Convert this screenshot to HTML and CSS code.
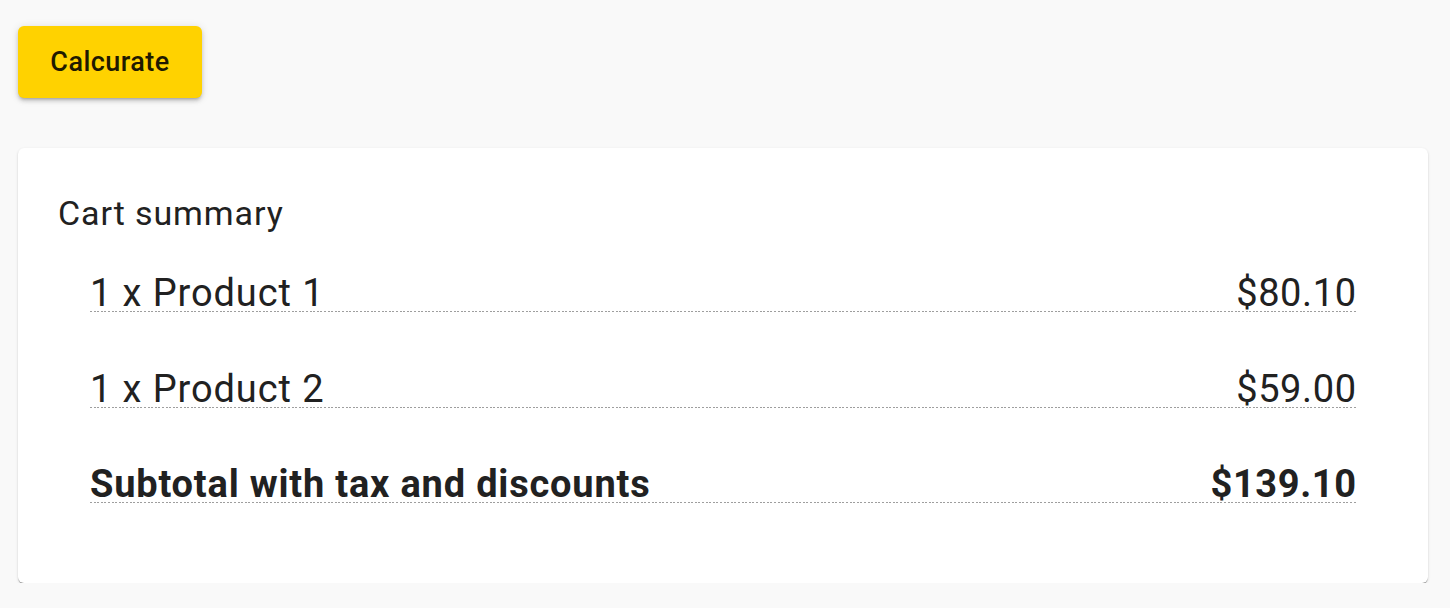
FILE: index.html
```html
<!DOCTYPE html>
<html>
<head>
<meta charset="utf-8">
<link rel="stylesheet" href="styles.css">
</head>
<body>
<div class="page">
  <div class="actions">
    <button class="btn">Calcurate</button>
  </div>
  <div class="card">
    <div class="card-title">Cart summary</div>
    <div class="rows">
      <div class="row"><span>1 x Product 1</span><span>$80.10</span></div>
      <div class="row"><span>1 x Product 2</span><span>$59.00</span></div>
      <div class="row total"><span>Subtotal with tax and discounts</span><span>$139.10</span></div>
    </div>
  </div>
</div>
</body>
</html>
```

FILE: styles.css
```css
html, body {
  margin: 0;
  padding: 0;
  background: #f9f9f9;
  font-family: Roboto, "Liberation Sans", sans-serif;
  color: #212121;
}
.page {
  padding: 26px 22px 0 18px;
  display: flex;
  flex-direction: column;
  gap: 50px;
}
.actions {
  display: flex;
}
.btn {
  width: 184px;
  height: 72px;
  border: none;
  border-radius: 6px;
  background: #ffd200;
  color: #1f1a00;
  font-family: Roboto, "Liberation Sans", sans-serif;
  font-size: 27px;
  font-weight: 500;
  letter-spacing: 0.45px;
  box-shadow: 0 3px 3px -2px rgba(0,0,0,0.2), 0 3px 4px 0 rgba(0,0,0,0.14), 0 1px 8px 0 rgba(0,0,0,0.12);
  cursor: pointer;
}
.card {
  background: #fff;
  border-radius: 6px;
  height: 435px;
  box-sizing: border-box;
  padding: 45px 72px 0 40px;
  box-shadow: 0 2px 1px -1px rgba(0,0,0,0.3), 0 1px 1px 0 rgba(0,0,0,0.18), 0 1px 3px 0 rgba(0,0,0,0.12);
}
.card-title {
  font-size: 34px;
  line-height: 40px;
  letter-spacing: 0.9px;
}
.rows {
  padding-left: 32px;
  display: flex;
  flex-direction: column;
  gap: 57.5px;
  margin-top: 41px;
}
.row {
  display: flex;
  justify-content: space-between;
  font-size: 38px;
  line-height: 38px;
  height: 38px;
  box-sizing: border-box;
  padding-bottom: 1px;
  letter-spacing: 0.9px;
  background: repeating-linear-gradient(90deg, #9e9e9e 0 2px, transparent 2px 3.6px) left bottom / 100% 1px no-repeat;
}
.row span:last-child {
  letter-spacing: 0.6px;
  margin-right: -0.6px;
}
.row.total {
  font-weight: 700;
  letter-spacing: 0.8px;
}
```
